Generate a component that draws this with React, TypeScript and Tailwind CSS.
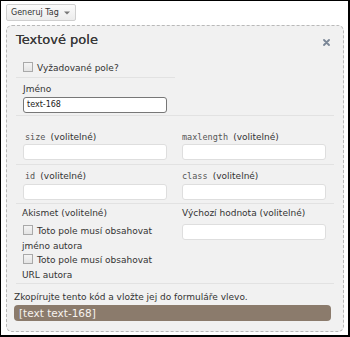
import React from 'react';

const font = { fontFamily: '"DejaVu Sans", Verdana, sans-serif' };

const Checkbox: React.FC = () => (
  <span className="inline-block w-[10px] h-[10px] border border-[#a9a9a9] bg-gradient-to-b from-[#f4f4f4] to-[#e4e4e4] align-[-1px] mr-[4px]" />
);

const Mono: React.FC<{ children: React.ReactNode }> = ({ children }) => (
  <span className="font-['DejaVu_Sans_Mono',monospace] text-[8.5px] text-[#555]">{children}</span>
);

const Field: React.FC = () => (
  <div className="w-[144px] h-[16px] bg-white border border-[#dedede] rounded-[3px]" />
);

export default function App() {
  return (
    <div
      className="w-[350px] h-[337px] bg-white border-t border-l border-r-2 border-b-2 border-black text-[#333] overflow-hidden"
      style={font}
    >
      {/* Generuj Tag button */}
      <div className="ml-[5px] mt-[3px] w-[70px] h-[17px] flex items-center pl-[4px] gap-[5px] whitespace-nowrap border border-[#cfcfcf] rounded-[2px] bg-gradient-to-b from-[#fbfbfb] to-[#ececec] text-[8px] text-[#333]">
        <span>Generuj Tag</span>
        <svg className="shrink-0" width="6" height="4" viewBox="0 0 6 4">
          <path d="M0 0.5H6L3 3.5Z" fill="#777" />
        </svg>
      </div>

      {/* Dashed panel */}
      <div className="ml-[5px] mt-[4px] w-[338px] h-[307px] border border-dashed border-[#b9b9b9] rounded-[6px] bg-[#f1f1f1] px-[9px]">
        {/* Title */}
        <div className="h-[31px] flex items-start">
          <h2 className="pt-[6px] text-[13px] leading-[16px] font-normal text-[#3a3a3a] [text-shadow:0_0_0.4px_#3a3a3a]">Textové pole</h2>
          <svg className="ml-auto mt-[13px] mr-[4px]" width="7" height="7" viewBox="0 0 7 7">
            <path d="M1 1L6 6M6 1L1 6" stroke="#7b8797" strokeWidth="1.8" strokeLinecap="round" />
          </svg>
        </div>

        {/* Required */}
        <div className="grid grid-cols-[159px_159px]">
          <div className="h-[21px] border-b border-[#e2e2e2] pl-[7px] pt-[5px] text-[9px] leading-[12px]">
            <Checkbox />
            Vyžadované pole?
          </div>
          <div />
        </div>

        {/* Name */}
        <div className="h-[38px] border-b border-[#e2e2e2] pl-[7px] pt-[5px] text-[9px] leading-[12px]">
          <div>Jméno</div>
          <div className="mt-[2px] w-[144px] h-[16px] bg-white border border-[#777] rounded-[3px] pl-[3px] text-[8px] leading-[14px] text-[#222]">
            text-168
          </div>
        </div>

        {/* size / maxlength */}
        <div className="h-[49px] border-b border-[#e2e2e2] grid grid-cols-[159px_159px] pt-[15px] text-[9px] leading-[12px]">
          <div className="pl-[7px]">
            <div className="pl-[2px]">
              <Mono>size </Mono>(volitelné)
            </div>
            <div className="mt-[1px]">
              <Field />
            </div>
          </div>
          <div className="pl-[7px]">
            <div>
              <Mono>maxlength </Mono>(volitelné)
            </div>
            <div className="mt-[1px]">
              <Field />
            </div>
          </div>
        </div>

        {/* id / class */}
        <div className="h-[39px] border-b border-[#e2e2e2] grid grid-cols-[159px_159px] pt-[5px] text-[9px] leading-[12px]">
          <div className="pl-[7px]">
            <div className="pl-[2px]">
              <Mono>id </Mono>(volitelné)
            </div>
            <div className="mt-[2px]">
              <Field />
            </div>
          </div>
          <div className="pl-[7px]">
            <div>
              <Mono>class </Mono>(volitelné)
            </div>
            <div className="mt-[2px]">
              <Field />
            </div>
          </div>
        </div>

        {/* Akismet / default value */}
        <div className="h-[80px] border-b border-[#e2e2e2] grid grid-cols-[159px_159px] pt-[3px] text-[9px] leading-[12px]">
          <div className="pl-[6px]">
            <div>Akismet (volitelné)</div>
            <div className="mt-[5px] leading-[14.5px] w-[140px]">
              <div>
                <span className="pl-[1px]">
                  <Checkbox />
                </span>
                Toto pole musí obsahovat jméno autora
              </div>
              <div>
                <span className="pl-[1px]">
                  <Checkbox />
                </span>
                Toto pole musí obsahovat URL autora
              </div>
            </div>
          </div>
          <div className="pl-[7px]">
            <div>Výchozí hodnota (volitelné)</div>
            <div className="mt-[5px]">
              <Field />
            </div>
          </div>
        </div>

        {/* Copy code */}
        <div className="pt-[7px] -mx-[2px] text-[9px] leading-[12px]">
          <div>Zkopírujte tento kód a vložte jej do formuláře vlevo.</div>
          <div className="mt-[2px] w-[317px] h-[16px] rounded-[4px] bg-[#8b7b6c] pl-[5px] text-[10.5px] leading-[16px] text-[#f6f3ef]">
            [text text-168]
          </div>
        </div>
      </div>
    </div>
  );
}
